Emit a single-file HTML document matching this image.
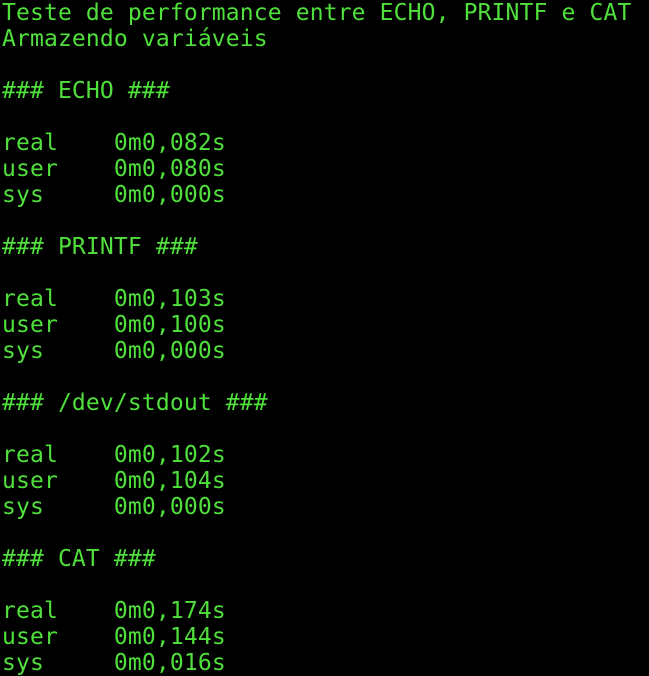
<!DOCTYPE html>
<html><head><style>
html,body{margin:0;padding:0;background:#000;width:649px;height:676px;overflow:hidden}
pre{margin:0;position:absolute;left:2px;top:0px;font-family:"DejaVu Sans Mono",monospace;font-size:23px;letter-spacing:0.14px;line-height:26px;color:#50e03c;white-space:pre;tab-size:8}
</style></head><body><pre>Teste de performance entre ECHO, PRINTF e CAT
Armazendo variáveis

### ECHO ###

real	0m0,082s
user	0m0,080s
sys	0m0,000s

### PRINTF ###

real	0m0,103s
user	0m0,100s
sys	0m0,000s

### /dev/stdout ###

real	0m0,102s
user	0m0,104s
sys	0m0,000s

### CAT ###

real	0m0,174s
user	0m0,144s
sys	0m0,016s</pre></body></html>
